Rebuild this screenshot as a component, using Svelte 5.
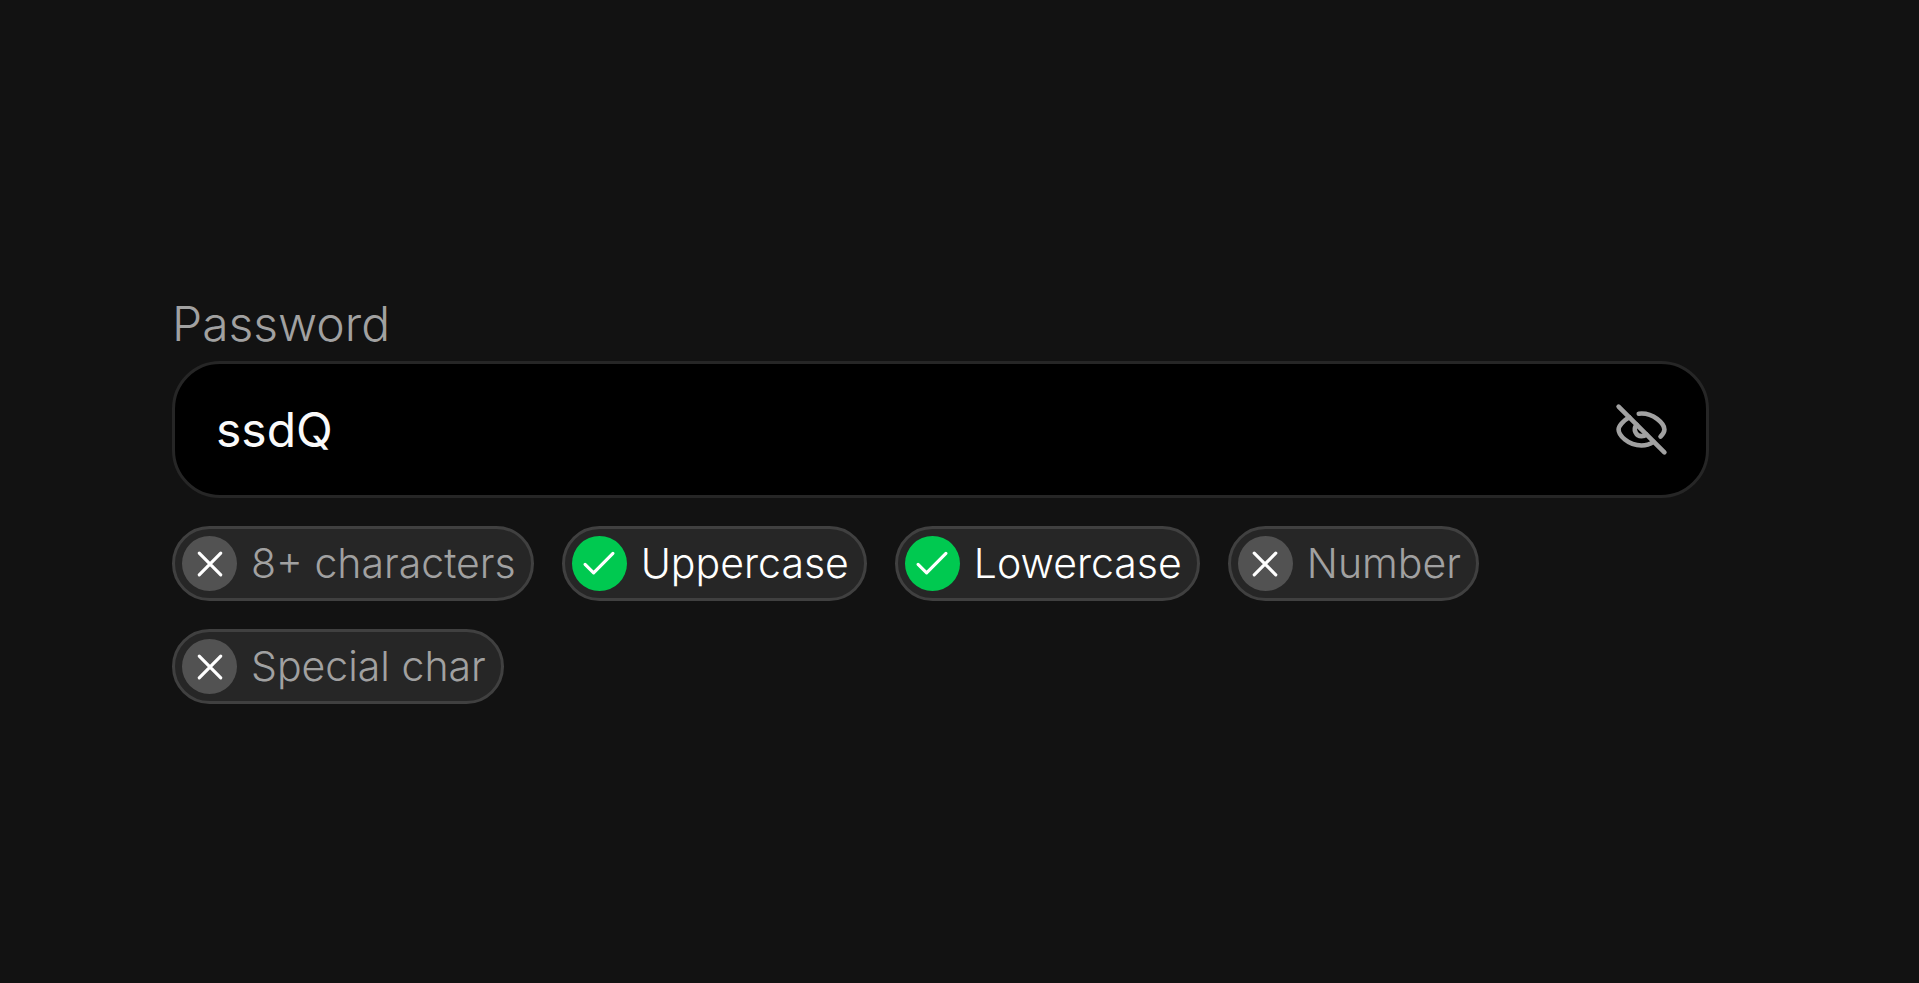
<script>
  let password = $state('ssdQ');
  let visible = $state(true);

  const rules = [
    { label: '8+ characters', test: (v) => v.length >= 8 },
    { label: 'Uppercase', test: (v) => /[A-Z]/.test(v) },
    { label: 'Lowercase', test: (v) => /[a-z]/.test(v) },
    { label: 'Number', test: (v) => /\d/.test(v) },
    { label: 'Special char', test: (v) => /[^A-Za-z0-9]/.test(v) }
  ];

  let checks = $derived(rules.map((r) => ({ label: r.label, met: r.test(password) })));
</script>

<main>
  <div class="form">
    <label for="password">Password</label>
    <div class="field">
      <input
        id="password"
        type={visible ? 'text' : 'password'}
        bind:value={password}
        autocomplete="off"
        spellcheck="false"
      />
      <button type="button" aria-label="Toggle password visibility" onclick={() => (visible = !visible)}>
        <svg viewBox="0 0 24 24" aria-hidden="true">
          <path d="M2 2 22 22" />
          <path d="M6.700 6.700C3.900 8.200 2 10.600 2 12c0 2.400 4 7 10 7 1.900 0 3.600-.5 5.200-1.600" />
          <path d="M10.800 5.100C17.200 4.400 22 9.600 22 12c0 .7-.6 2-1.700 3.100" />
          <path d="M9.900 9.900c-1.800 2.100-.3 5 2.100 5 .9 0 1.600-.3 2.100-.8" />
        </svg>
      </button>
    </div>
    <ul>
      {#each checks as check (check.label)}
        <li class:met={check.met}>
          <span class="mark">
            <svg viewBox="0 0 24 24" aria-hidden="true">
              {#if check.met}
                <path d="M3.200 12.200 8.600 17.600 20.800 5.300" />
              {:else}
                <path d="M5.200 5.200 18.800 18.800M18.800 5.200 5.200 18.800" />
              {/if}
            </svg>
          </span>
          {check.label}
        </li>
      {/each}
    </ul>
  </div>
</main>

<style>
  :global(body) {
    margin: 0;
    background: #121212;
  }

  main {
    box-sizing: border-box;
    min-height: 100vh;
    padding: 10px 210px 0 172px;
    display: flex;
    align-items: center;
    font-family: Inter, sans-serif;
    font-weight: 300;
    color: #a1a1a1;
  }

  .form {
    flex: 1;
    min-width: 0;
    display: flex;
    flex-direction: column;
  }

  label {
    align-self: flex-start;
    margin-bottom: 3px;
    font-size: 48px;
    line-height: 69px;
  }

  .field {
    box-sizing: border-box;
    height: 137px;
    display: flex;
    align-items: center;
    padding: 0 37px 0 41px;
    border: 3px solid #262626;
    border-radius: 48px;
    background: #000;
  }

  input {
    flex: 1;
    min-width: 0;
    padding: 0;
    border: 0;
    outline: 0;
    background: transparent;
    color: #fafafa;
    font: 400 48px/69px Inter, sans-serif;
  }

  button {
    display: flex;
    padding: 0;
    border: 0;
    background: transparent;
    color: #a1a1a1;
    cursor: pointer;
  }

  svg {
    fill: none;
    stroke: currentColor;
    stroke-linecap: round;
    stroke-linejoin: round;
    stroke-width: 2;
  }

  button svg {
    width: 55px;
    height: 55px;
  }

  ul {
    display: flex;
    flex-wrap: wrap;
    gap: 28px;
    margin: 28px 0 0;
    padding: 0;
    list-style: none;
  }

  li {
    display: flex;
    align-items: center;
    gap: 14px;
    padding: 7px 15px 7px 7px;
    border: 3px solid #404040;
    border-radius: 38px;
    background: #262626;
    font-size: 41px;
    line-height: 55px;
  }

  .met {
    color: #fff;
  }

  .mark {
    display: flex;
    align-items: center;
    justify-content: center;
    width: 55px;
    height: 55px;
    border-radius: 50%;
    background: #525252;
    color: #fff;
  }

  .met .mark {
    background: #00c950;
  }

  .mark svg {
    width: 38px;
    height: 38px;
  }
</style>
